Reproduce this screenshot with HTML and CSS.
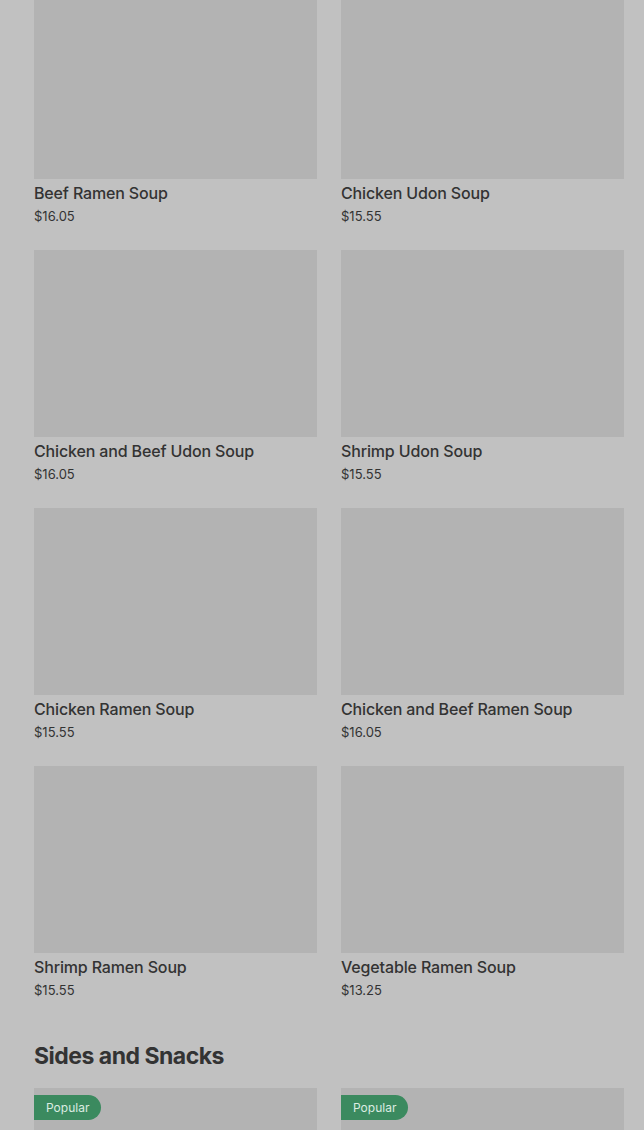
FILE: index.html
```html
<!DOCTYPE html>
<html lang="en">
<head>
    <meta charset="UTF-8">
    <meta name="viewport" content="width=device-width, initial-scale=1.0">
    <title>Menu</title>
    <link rel="stylesheet" href="styles.css">
</head>
<body>
    <div class="container">
        <div class="grid">
            <div class="item">
                <div class="thumb"></div>
                <h3 class="item-name">Beef Ramen Soup</h3>
                <p class="item-price">$16.05</p>
            </div>
            <div class="item">
                <div class="thumb"></div>
                <h3 class="item-name">Chicken Udon Soup</h3>
                <p class="item-price">$15.55</p>
            </div>
            <div class="item">
                <div class="thumb"></div>
                <h3 class="item-name">Chicken and Beef Udon Soup</h3>
                <p class="item-price">$16.05</p>
            </div>
            <div class="item">
                <div class="thumb"></div>
                <h3 class="item-name">Shrimp Udon Soup</h3>
                <p class="item-price">$15.55</p>
            </div>
            <div class="item">
                <div class="thumb"></div>
                <h3 class="item-name">Chicken Ramen Soup</h3>
                <p class="item-price">$15.55</p>
            </div>
            <div class="item">
                <div class="thumb"></div>
                <h3 class="item-name">Chicken and Beef Ramen Soup</h3>
                <p class="item-price">$16.05</p>
            </div>
            <div class="item">
                <div class="thumb"></div>
                <h3 class="item-name">Shrimp Ramen Soup</h3>
                <p class="item-price">$15.55</p>
            </div>
            <div class="item">
                <div class="thumb"></div>
                <h3 class="item-name">Vegetable Ramen Soup</h3>
                <p class="item-price">$13.25</p>
            </div>
        </div>

        <h2 class="section-title">Sides and Snacks</h2>

        <div class="grid">
            <div class="item">
                <div class="thumb">
                    <span class="badge">Popular</span>
                </div>
            </div>
            <div class="item">
                <div class="thumb">
                    <span class="badge">Popular</span>
                </div>
            </div>
        </div>
    </div>
</body>
</html>
```

FILE: styles.css
```css
:root {
    --background-color: #c1c1c1;
    --thumb-color: #b3b3b3;
    --text-primary: #333333;
    --badge-color: #3b8a5f;
    --badge-text: #dcece1;
}

body {
    font-family: 'Inter', 'Noto Sans', sans-serif;
    margin: 0;
    padding: 0;
    background-color: var(--background-color);
    color: var(--text-primary);
    overflow: hidden;
}

.container {
    margin-top: -8px;
    padding: 0 20px 0 34px;
}

.grid {
    display: grid;
    grid-template-columns: 1fr 1fr;
    column-gap: 24px;
    row-gap: 25px;
}

.item {
    display: flex;
    flex-direction: column;
}

.thumb {
    position: relative;
    height: 187px;
    background-color: var(--thumb-color);
}

.item-name {
    margin: 3px 0 0;
    font-size: 16px;
    font-weight: 500;
    line-height: 22px;
    letter-spacing: -0.15px;
}

.item-price {
    margin: 3px 0 0;
    font-size: 13px;
    line-height: 18px;
}

.section-title {
    margin: 43px 0 18px;
    font-size: 23px;
    font-weight: 700;
    line-height: 28px;
    letter-spacing: -0.5px;
}

.badge {
    position: absolute;
    top: 7px;
    left: 0;
    padding: 0 12px;
    height: 25px;
    line-height: 25px;
    font-size: 12px;
    color: var(--badge-text);
    background-color: var(--badge-color);
    border-radius: 0 13px 13px 0;
}
```
